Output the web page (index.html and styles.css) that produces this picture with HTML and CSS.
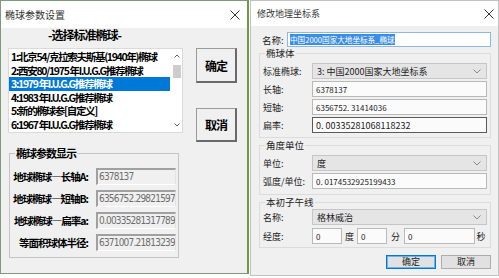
FILE: index.html
```html
<!DOCTYPE html>
<html lang="zh-CN">
  <head>
    <meta charset="UTF-8" />
    <meta name="viewport" content="width=device-width, initial-scale=1.0" />
    <title>椭球参数设置</title>
    <link rel="stylesheet" href="styles.css">
  </head>
  <body>
    <div class="screen">
      <!-- Left dialog: ellipsoid parameters -->
      <div class="win win-ellipsoid">
        <div class="titlebar">
          <span class="title">椭球参数设置</span>
          <svg class="close" width="10" height="10" viewBox="0 0 10 10">
            <path d="M0.5 0.5 L9.5 9.5 M9.5 0.5 L0.5 9.5" stroke="#333" stroke-width="1" fill="none" />
          </svg>
        </div>
        <div class="body">
          <div class="main-col">
            <div class="heading">-选择标准椭球-</div>
            <div class="listbox">
              <ul class="items">
                <li>1:北京54/克拉索夫斯基(1940年)椭球</li>
                <li>2:西安80/1975 年I.U.G.G推荐椭球</li>
                <li class="selected">3:1979 年I.U.G.G推荐椭球</li>
                <li>4:1983 年I.U.G.G推荐椭球</li>
                <li>5:新的椭球参[自定义]</li>
                <li>6:1967 年I.U.G.G推荐椭球</li>
              </ul>
              <div class="scrollbar">
                <svg class="arrow" width="10" height="14" viewBox="0 0 10 14">
                  <path d="M2.5 8.5 L5 6 L7.5 8.5" stroke="#606060" stroke-width="1" fill="none" />
                </svg>
                <div class="thumb"></div>
                <div class="spacer"></div>
                <svg class="arrow" width="10" height="14" viewBox="0 0 10 14">
                  <path d="M2.5 5.5 L5 8 L7.5 5.5" stroke="#606060" stroke-width="1" fill="none" />
                </svg>
              </div>
            </div>
            <fieldset class="group">
              <legend>椭球参数显示</legend>
              <div class="param-row">
                <label>地球椭球—长轴A:</label>
                <div class="readonly">6378137</div>
              </div>
              <div class="param-row">
                <label>地球椭球—短轴B:</label>
                <div class="readonly">6356752.29821597</div>
              </div>
              <div class="param-row">
                <label>地球椭球—扁率a:</label>
                <div class="readonly">0.00335281317789</div>
              </div>
              <div class="param-row">
                <label>等面积球体半径:</label>
                <div class="readonly">6371007.21813239</div>
              </div>
            </fieldset>
          </div>
          <div class="btn-col">
            <button class="btn3d btn-ok">确定</button>
            <button class="btn3d btn-cancel">取消</button>
          </div>
        </div>
      </div>

      <!-- Right dialog: edit geographic coordinate system -->
      <div class="win win-geo">
        <div class="titlebar">
          <span class="title">修改地理坐标系</span>
          <svg class="close" width="10" height="10" viewBox="0 0 10 10">
            <path d="M0.5 0.5 L9.5 9.5 M9.5 0.5 L0.5 9.5" stroke="#333" stroke-width="1" fill="none" />
          </svg>
        </div>
        <div class="body">
          <div class="name-row">
            <label>名称:</label>
            <div class="name-input"><span class="hl">中国2000国家大地坐标系_椭球</span></div>
          </div>

          <fieldset class="box">
            <legend>椭球体</legend>
            <div class="row">
              <label>标准椭球:</label>
              <div class="combo">
                <span>3: 中国2000国家大地坐标系</span>
                <svg width="8" height="5" viewBox="0 0 8 5"><path d="M0.5 0.5 L4 4 L7.5 0.5" stroke="#888" fill="none" /></svg>
              </div>
            </div>
            <div class="row">
              <label>长轴:</label>
              <div class="field">6378137</div>
            </div>
            <div class="row">
              <label>短轴:</label>
              <div class="field">6356752. 31414036</div>
            </div>
            <div class="row">
              <label>扁率:</label>
              <div class="field field-dark">0. 00335281068118232</div>
            </div>
          </fieldset>

          <fieldset class="box">
            <legend>角度单位</legend>
            <div class="row">
              <label>单位:</label>
              <div class="combo">
                <span>度</span>
                <svg width="8" height="5" viewBox="0 0 8 5"><path d="M0.5 0.5 L4 4 L7.5 0.5" stroke="#888" fill="none" /></svg>
              </div>
            </div>
            <div class="row">
              <label>弧度/单位:</label>
              <div class="field">0. 0174532925199433</div>
            </div>
          </fieldset>

          <fieldset class="box box-last">
            <legend>本初子午线</legend>
            <div class="row">
              <label>名称:</label>
              <div class="combo">
                <span>格林威治</span>
                <svg width="8" height="5" viewBox="0 0 8 5"><path d="M0.5 0.5 L4 4 L7.5 0.5" stroke="#888" fill="none" /></svg>
              </div>
            </div>
            <div class="row row-lon">
              <label>经度:</label>
              <div class="field lon-deg">0</div>
              <span class="unit unit-deg">度</span>
              <div class="field lon-min">0</div>
              <span class="unit unit-min">分</span>
              <div class="field lon-sec">0</div>
              <span class="unit unit-sec">秒</span>
            </div>
          </fieldset>

          <div class="actions">
            <button class="win-btn win-btn-default">确定</button>
            <button class="win-btn">取消</button>
          </div>
        </div>
      </div>
    </div>
  </body>
</html>
```

FILE: styles.css
```css
/* Two Windows dialogs side by side */
body {
  margin: 0;
  background: #fff;
  font-family: "Noto Sans CJK SC", "Noto Sans", sans-serif;
}
.screen {
  display: flex;
  width: 499px;
  height: 278px;
  gap: 1px;
  align-items: flex-start;
}
.win {
  box-sizing: border-box;
  width: 249px;
  background: #f0f0f0;
  display: flex;
  flex-direction: column;
}
.titlebar {
  background: #fff;
  display: flex;
  align-items: center;
  justify-content: space-between;
  flex: none;
}
.title {
  font-size: 9px;
  color: #333;
}
fieldset {
  margin: 0;
  min-width: 0;
}
legend {
  padding: 0 1px;
}

/* ---------- Left dialog ---------- */
.win-ellipsoid {
  height: 274px;
  border: 1px solid #7d9a7d;
  border-right: 2px solid #6b9a48;
}
.win-ellipsoid .titlebar {
  height: 27px;
  padding: 0 7px 0 4px;
}
.win-ellipsoid .title {
  font-size: 10px;
}
.win-ellipsoid .body {
  display: flex;
  padding-left: 7px;
  font-weight: 700;
  color: #000;
}
.main-col {
  width: 175px;
}
.heading {
  height: 14px;
  line-height: 14px;
  margin-left: 40px;
  font-size: 12px;
  letter-spacing: -1px;
  white-space: nowrap;
}
.listbox {
  margin-top: 6px;
  height: 85px;
  box-sizing: border-box;
  border: 1px solid #dadada;
  background: #fff;
  display: flex;
}
.items {
  list-style: none;
  margin: 0;
  padding: 1px 0 0;
  flex: 1;
  overflow: hidden;
}
.items li {
  height: 13.6px;
  line-height: 13.6px;
  padding-left: 2px;
  font-size: 10.5px;
  letter-spacing: -1.3px;
  white-space: nowrap;
}
.items li.selected {
  background: #0078d7;
  color: #fff;
}
.scrollbar {
  width: 10px;
  margin-left: 2px;
  display: flex;
  flex-direction: column;
}
.scrollbar .arrow {
  display: block;
  flex: none;
}
.thumb {
  height: 13px;
  margin: 2px 1px 0;
  background: #cdcdcd;
}
.spacer {
  flex: 1;
}
.group {
  margin: 13px 4px 0 1px;
  padding: 8px 0 6px;
  border: 1px solid #c4c4c4;
}
.group legend {
  margin-left: 5px;
  font-size: 11px;
  line-height: 14px;
  letter-spacing: -1px;
}
.param-row {
  display: flex;
  align-items: center;
  height: 17px;
}
.param-row + .param-row {
  margin-top: 5px;
}
.param-row label {
  width: 78px;
  text-align: right;
  font-size: 10.5px;
  letter-spacing: -1px;
  white-space: nowrap;
}
.readonly {
  box-sizing: border-box;
  width: 80px;
  height: 17px;
  margin-left: 8px;
  padding-left: 1px;
  border-top: 2px solid #a0a0a0;
  border-left: 2px solid #a0a0a0;
  border-right: 1px solid #e3e3e3;
  border-bottom: 1px solid #fff;
  background: #f0f0f0;
  color: #6d6d6d;
  font-family: "DejaVu Sans Condensed", "DejaVu Sans", sans-serif;
  font-weight: 400;
  font-size: 10px;
  line-height: 14px;
  letter-spacing: -0.8px;
  white-space: nowrap;
  overflow: hidden;
}
.btn-col {
  display: flex;
  flex-direction: column;
  margin-left: 13px;
  padding-top: 20px;
}
.btn3d {
  width: 41px;
  padding: 0;
  background: #f0f0f0;
  border: 1px solid #9a9a9a;
  border-right: 2px solid #6a6a6a;
  border-bottom: 2px solid #6a6a6a;
  font-family: inherit;
  font-weight: 700;
  font-size: 12px;
  letter-spacing: -1px;
  color: #000;
}
.btn-ok {
  height: 35px;
}
.btn-cancel {
  height: 34px;
  margin-top: 25px;
}

/* ---------- Right dialog ---------- */
.win-geo {
  height: 276px;
  border: 1px solid #c2c2c2;
  color: #222;
  font-size: 9px;
}
.win-geo .titlebar {
  height: 25px;
  padding: 0 4px 0 6px;
}
.win-geo .body {
  padding: 0 7px 0 8px;
}
.name-row {
  display: flex;
  align-items: center;
  height: 15px;
  margin: 6px 0 0 3px;
}
.name-row label {
  width: 25px;
  font-size: 9.5px;
}
.name-input {
  box-sizing: border-box;
  width: 204px;
  height: 15px;
  border: 1px solid #8fb8e0;
  background: #fff;
  display: flex;
  align-items: center;
  padding-left: 2px;
}
.hl {
  background: #3a8ee6;
  color: #fff;
  font-size: 7.6px;
  line-height: 11px;
  white-space: nowrap;
}
.box {
  padding: 4px 3px 4px;
  border: 1px solid #dcdcdc;
}
.box + .box {
  margin-top: 1px;
  padding-bottom: 5px;
}
.box-last {
  padding-top: 1px;
}
.box-last.box {
  padding-bottom: 3px;
}
.box legend {
  margin-left: 2px;
  font-size: 9.5px;
  line-height: 12px;
}
.row {
  display: flex;
  align-items: center;
  height: 16px;
}
.row + .row {
  margin-top: 2px;
}
.box-last .row + .row {
  margin-top: 3px;
}
.row label {
  width: 49px;
  flex: none;
  white-space: nowrap;
}
.combo,
.field {
  box-sizing: border-box;
  height: 16px;
  display: flex;
  align-items: center;
}
.combo {
  flex: 1;
  justify-content: space-between;
  padding: 0 5px 0 4px;
  background: #e5e5e5;
  border: 1px solid #c6c6c6;
}
.field {
  flex: 1;
  padding-left: 3px;
  background: #fbfbfb;
  border: 1px solid #b9b9b9;
  font-size: 8px;
  white-space: nowrap;
}
.field-dark {
  border-color: #5a5a5a;
  font-size: 9px;
}
.lon-deg,
.lon-min,
.lon-sec {
  flex: none;
}
.lon-deg,
.lon-min {
  width: 30px;
}
.lon-sec {
  width: 71px;
}
.unit {
  text-align: center;
}
.unit-deg {
  width: 15px;
}
.unit-min {
  width: 17px;
}
.unit-sec {
  flex: 1;
}
.actions {
  display: flex;
  justify-content: flex-end;
  gap: 5px;
  margin-top: 7px;
}
.win-btn {
  box-sizing: border-box;
  width: 50px;
  height: 14px;
  padding: 0;
  background: #e1e1e1;
  border: 1px solid #adadad;
  font-family: inherit;
  font-size: 9px;
  line-height: 12px;
  color: #222;
}
.win-btn-default {
  border-color: #0078d7;
  box-shadow: inset 0 0 0 1px #6fb3ea;
}
```
